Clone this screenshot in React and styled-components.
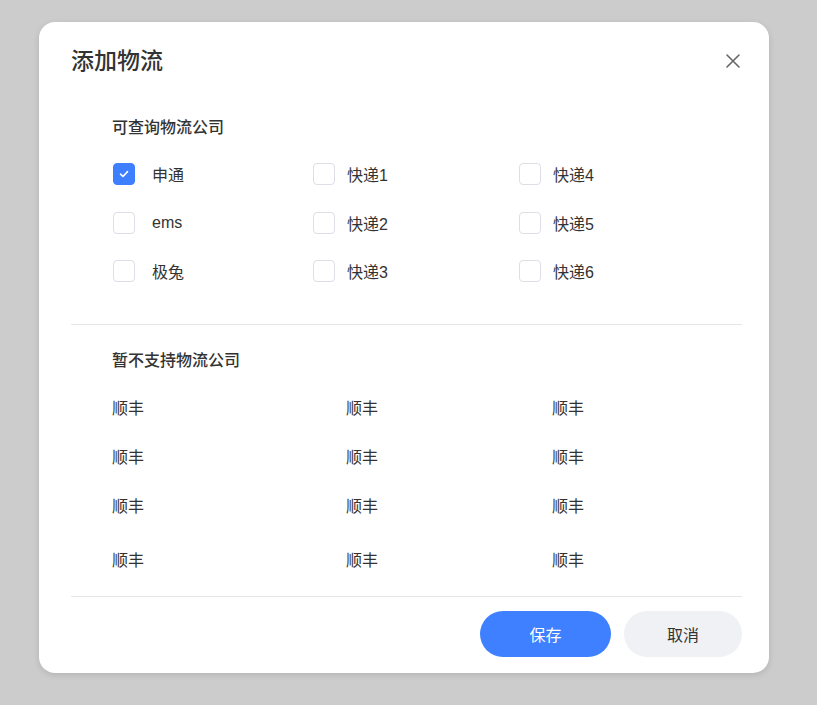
import React from 'react';
import styled, { createGlobalStyle } from 'styled-components';

const GlobalStyle = createGlobalStyle`
  html, body {
    margin: 0;
    padding: 0;
    background: #cccccc;
  }
  body {
    font-family: 'Liberation Sans', 'Noto Sans CJK SC', sans-serif;
    color: #333;
  }
`;

const Page = styled.div`
  width: 817px;
  height: 705px;
  padding: 22px 0 0 39px;
  box-sizing: border-box;
`;

const Dialog = styled.div`
  width: 730px;
  background: #fff;
  border-radius: 16px;
  box-shadow: 0 2px 6px rgba(0, 0, 0, 0.12);
  padding: 0 27px 16px 32px;
  box-sizing: border-box;
`;

const Header = styled.div`
  display: flex;
  align-items: center;
  justify-content: space-between;
  padding-top: 24px;
  height: 30px;
`;

const Title = styled.h2`
  margin: 0;
  font-size: 23px;
  line-height: 30px;
  font-weight: 500;
  color: #333;
`;

const CloseButton = styled.button`
  border: none;
  background: none;
  padding: 0;
  width: 16px;
  height: 16px;
  margin-right: 1px;
  display: flex;
  align-items: center;
  justify-content: center;
  cursor: pointer;
`;

const Section = styled.div`
  padding-left: 41px;
  margin-top: ${(p) => p.$top}px;
`;

const SectionTitle = styled.div`
  font-size: 16px;
  line-height: 24px;
  font-weight: 500;
  color: #333;
  margin-bottom: ${(p) => p.$gap}px;
`;

const Grid = styled.div`
  display: grid;
  grid-template-columns: ${(p) => p.$cols};
  grid-auto-rows: ${(p) => p.$row || 'auto'};
`;

const CheckItem = styled.label`
  display: flex;
  align-items: center;
  gap: ${(p) => (p.$wide ? 17 : 12)}px;
  font-size: 16px;
  color: #333;
  padding-left: ${(p) => (p.$wide ? 1 : 0)}px;
  cursor: pointer;
`;

const Box = styled.span`
  width: 22px;
  height: 22px;
  box-sizing: border-box;
  border-radius: 4px;
  border: 1px solid ${(p) => (p.$checked ? '#3d7fff' : '#dcdfe6')};
  background: ${(p) => (p.$checked ? '#3d7fff' : '#fff')};
  display: flex;
  align-items: center;
  justify-content: center;
  flex-shrink: 0;
`;

const Cell = styled.div`
  display: flex;
  align-items: center;
  font-size: 16px;
  color: #333;
  height: ${(p) => (p.$tall ? 58 : 49)}px;
`;

const Divider = styled.div`
  height: 1px;
  background: #e6e6e6;
  margin-top: ${(p) => p.$top}px;
`;

const Footer = styled.div`
  display: flex;
  justify-content: flex-end;
  gap: 13px;
  padding-top: 14px;
`;

const Button = styled.button`
  height: 46px;
  width: ${(p) => p.$w}px;
  border: none;
  border-radius: 23px;
  font-family: inherit;
  font-size: 16px;
  background: ${(p) => (p.$primary ? '#3e80ff' : '#f0f1f5')};
  color: ${(p) => (p.$primary ? '#fff' : '#333')};
  cursor: pointer;
`;

const available = [
  { name: '申通', checked: true },
  { name: '快递1' },
  { name: '快递4' },
  { name: 'ems' },
  { name: '快递2' },
  { name: '快递5' },
  { name: '极兔' },
  { name: '快递3' },
  { name: '快递6' },
];

const unsupported = Array.from({ length: 12 }, () => '顺丰');

function Check({ checked }) {
  return (
    <Box $checked={checked}>
      {checked && (
        <svg width="12" height="12" viewBox="0 0 12 12">
          <path d="M2.5 6.2 L5 8.5 L9.5 3.6" fill="none" stroke="#fff" strokeWidth="1.6" strokeLinecap="round" strokeLinejoin="round" />
        </svg>
      )}
    </Box>
  );
}

export default function App() {
  return (
    <Page>
      <GlobalStyle />
      <Dialog>
        <Header>
          <Title>添加物流</Title>
          <CloseButton aria-label="close">
            <svg width="14" height="14" viewBox="0 0 14 14">
              <path d="M1 1 L13 13 M13 1 L1 13" stroke="#666" strokeWidth="1.6" strokeLinecap="round" />
            </svg>
          </CloseButton>
        </Header>

        <Section $top={40}>
          <SectionTitle $gap={10}>可查询物流公司</SectionTitle>
          <Grid $cols="201px 206px 1fr" $row="48.5px">
            {available.map((c, i) => (
              <CheckItem key={i} $wide={i % 3 === 0}>
                <Check checked={c.checked} />
                {c.name}
              </CheckItem>
            ))}
          </Grid>
        </Section>

        <Divider $top={28} />

        <Section $top={24}>
          <SectionTitle $gap={10}>暂不支持物流公司</SectionTitle>
          <Grid $cols="234px 206px 1fr">
            {unsupported.map((n, i) => (
              <Cell key={i} $tall={i >= 9}>
                {n}
              </Cell>
            ))}
          </Grid>
        </Section>

        <Divider $top={8} />

        <Footer>
          <Button $primary $w={131}>保存</Button>
          <Button $w={118}>取消</Button>
        </Footer>
      </Dialog>
    </Page>
  );
}
